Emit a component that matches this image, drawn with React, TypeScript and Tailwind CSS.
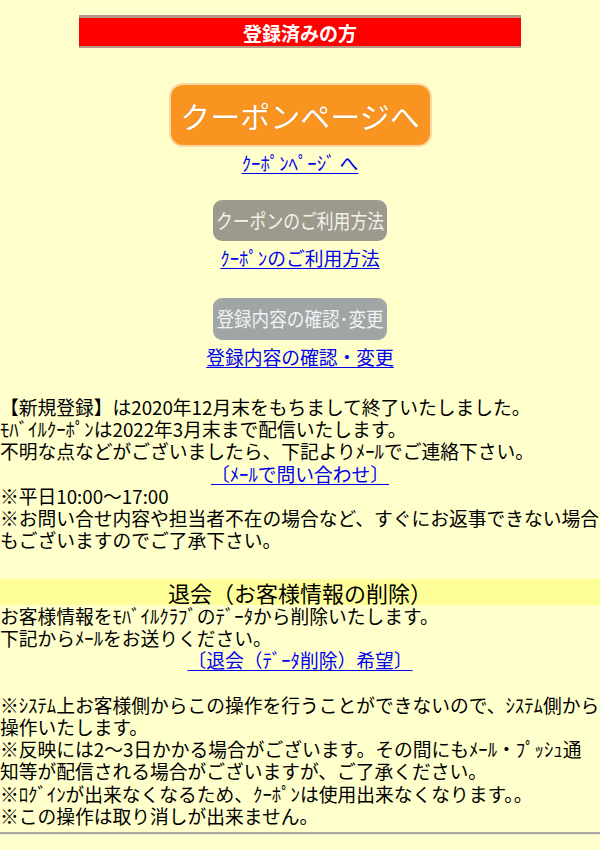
import React from "react";

const font = { fontFamily: '"Noto Sans CJK JP", "Noto Sans", sans-serif' };

function Line({ children }: { children: React.ReactNode }) {
  return <div className="whitespace-nowrap">{children}</div>;
}

function LinkLine({ children }: { children: React.ReactNode }) {
  return (
    <div className="whitespace-nowrap text-center">
      <a href="#" className="text-[#0000ee] underline underline-offset-2">
        {children}
      </a>
    </div>
  );
}

export default function App() {
  return (
    <div
      style={font}
      className="w-[600px] min-h-[850px] overflow-hidden bg-[#ffffcc] text-black text-[18.75px] leading-[22.25px] pt-[15px]"
    >
      <div className="mx-[79px] h-[33px] bg-[#ff0000] border-t-[3px] border-b-2 border-[#b8968a] flex items-center justify-center">
        <span className="text-white font-bold text-[19px] leading-none">登録済みの方</span>
      </div>

      <div className="mt-[35px] flex justify-center">
        <div className="w-[263px] h-[64px] rounded-[14px] bg-[#f8941f] border-2 border-[#fbd9a0] flex items-center justify-center">
          <span className="text-white text-[30px] leading-none [text-shadow:0_0_1px_#c86a00]">クーポンページへ</span>
        </div>
      </div>
      <div className="mt-[5px]">
        <LinkLine>ｸｰﾎﾟﾝﾍﾟｰｼﾞ へ</LinkLine>
      </div>

      <div className="mt-[26px] flex justify-center">
        <div className="w-[174px] h-[41px] rounded-[9px] bg-[#9d9a8d] flex items-center justify-center">
          <span className="text-[#f2f2ec] text-[20px] leading-none scale-x-[0.84] whitespace-nowrap">クーポンのご利用方法</span>
        </div>
      </div>
      <div className="mt-[6px]">
        <LinkLine>ｸｰﾎﾟﾝのご利用方法</LinkLine>
      </div>

      <div className="mt-[28px] flex justify-center">
        <div className="w-[174px] h-[42px] rounded-[9px] bg-[#a0a5a6] flex items-center justify-center">
          <span className="text-[#f2f2f2] text-[20px] leading-none scale-x-[0.88] whitespace-nowrap">登録内容の確認･変更</span>
        </div>
      </div>
      <div className="mt-[6px]">
        <LinkLine>登録内容の確認・変更</LinkLine>
      </div>

      <div className="mt-[28px]">
        <Line>【新規登録】は2020年12月末をもちまして終了いたしました。</Line>
        <Line>ﾓﾊﾞｲﾙｸｰﾎﾟﾝは2022年3月末まで配信いたします。</Line>
        <Line>不明な点などがございましたら、下記よりﾒｰﾙでご連絡下さい。</Line>
        <LinkLine>〔ﾒｰﾙで問い合わせ〕</LinkLine>
        <Line>※平日10:00～17:00</Line>
        <Line>※お問い合せ内容や担当者不在の場合など、すぐにお返事できない場合</Line>
        <Line>もございますのでご了承下さい。</Line>
      </div>

      <div className="mt-[27px] h-[26px] bg-[#ffff99] flex items-center justify-center">
        <span className="text-[22px] leading-none whitespace-nowrap">退会（お客様情報の削除）</span>
      </div>

      <div>
        <Line>お客様情報をﾓﾊﾞｲﾙｸﾗﾌﾞのﾃﾞｰﾀから削除いたします。</Line>
        <Line>下記からﾒｰﾙをお送りください。</Line>
        <LinkLine>〔退会（ﾃﾞｰﾀ削除）希望〕</LinkLine>
        <div className="h-[22.25px]" />
        <Line>※ｼｽﾃﾑ上お客様側からこの操作を行うことができないので、ｼｽﾃﾑ側から</Line>
        <Line>操作いたします。</Line>
        <Line>※反映には2～3日かかる場合がございます。その間にもﾒｰﾙ・ﾌﾟｯｼｭ通</Line>
        <Line>知等が配信される場合がございますが、ご了承ください。</Line>
        <Line>※ﾛｸﾞｲﾝが出来なくなるため、ｸｰﾎﾟﾝは使用出来なくなります。。</Line>
        <Line>※この操作は取り消しが出来ません。</Line>
      </div>

      <div className="mt-[5px] border-t-2 border-[#a8a8a0] border-b border-b-[#e8e8d0]" />
    </div>
  );
}
